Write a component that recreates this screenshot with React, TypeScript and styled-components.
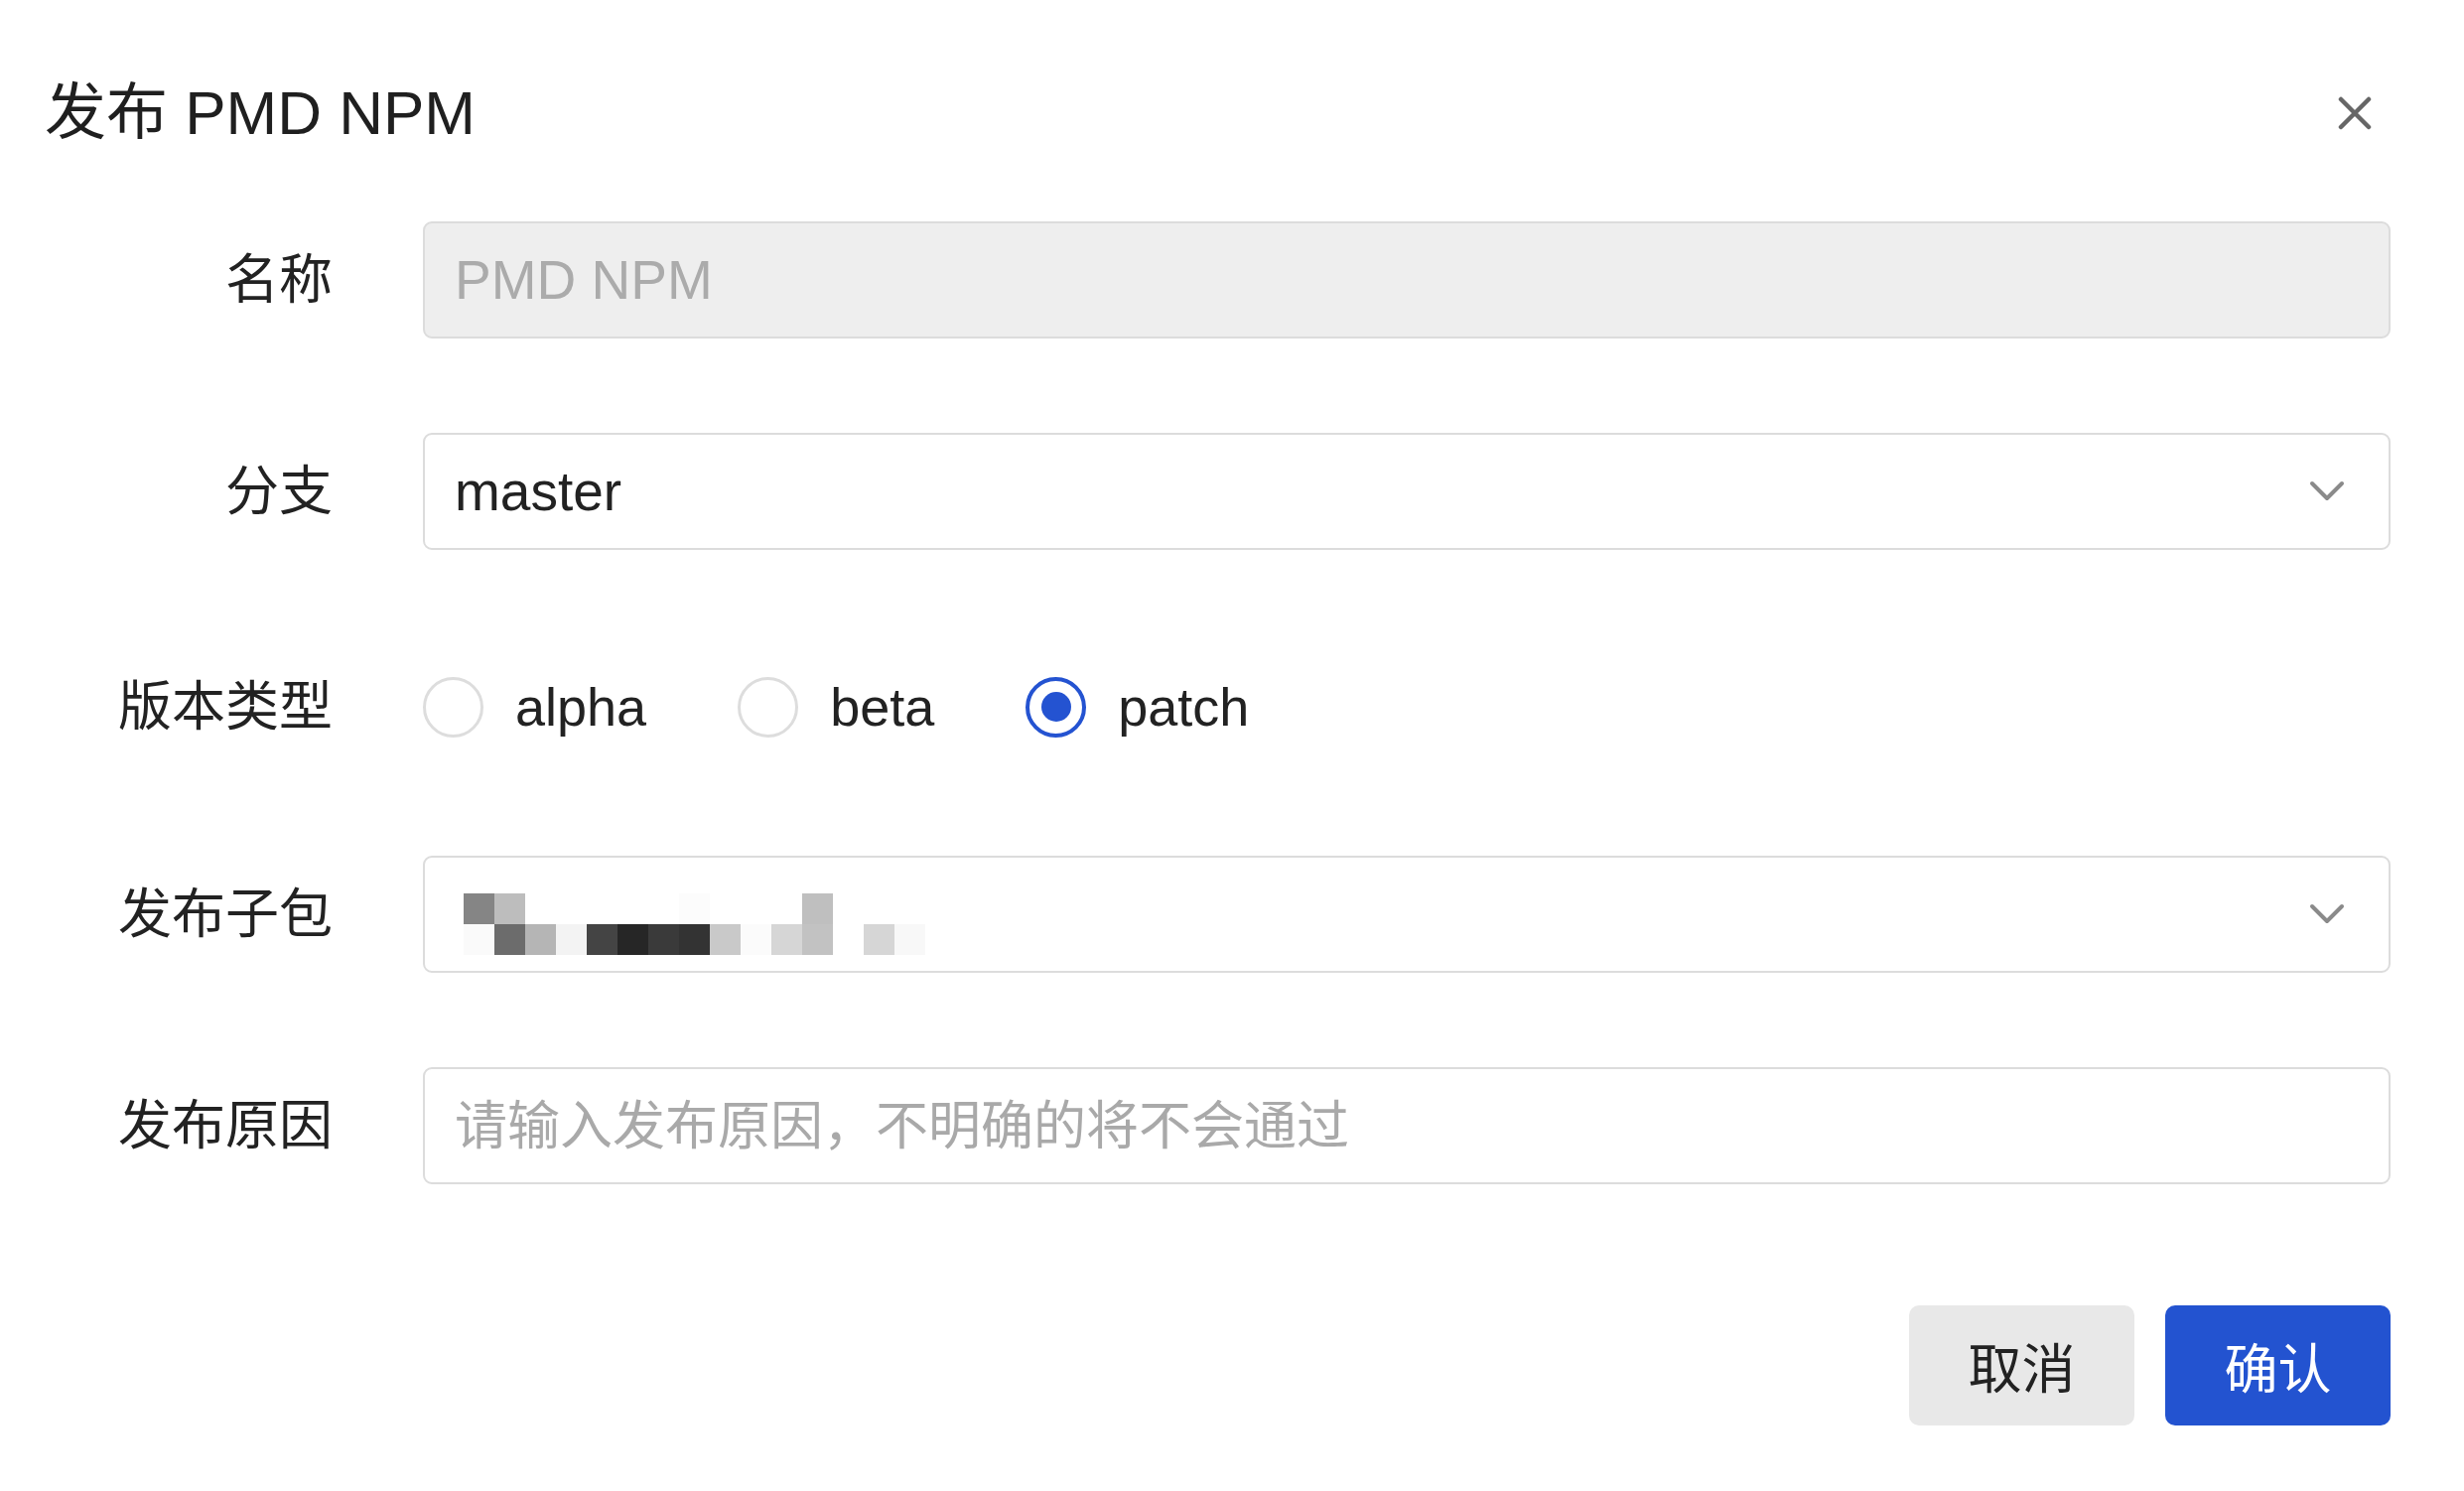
import styled, { createGlobalStyle } from "styled-components";

const GlobalStyle = createGlobalStyle`
  html, body {
    margin: 0;
    padding: 0;
    background: #ffffff;
  }
  body {
    font-family: "Liberation Sans", "Noto Sans CJK SC", sans-serif;
    color: #222222;
  }
  * {
    box-sizing: border-box;
  }
`;

const Dialog = styled.div`
  width: 2482px;
  min-height: 1502px;
  background: #ffffff;
  padding: 72px 74px 0 45px;
`;

const Header = styled.div`
  display: flex;
  align-items: center;
  justify-content: space-between;
  height: 84px;
`;

const Title = styled.h2`
  margin: 0;
  font-size: 62px;
  font-weight: 400;
  line-height: 84px;
  color: #1f1f1f;
`;

const CloseButton = styled.button`
  width: 72px;
  height: 72px;
  padding: 0;
  border: none;
  background: none;
  display: flex;
  align-items: center;
  justify-content: center;
  cursor: pointer;
`;

const Form = styled.div`
  margin-top: 67px;
  display: flex;
  flex-direction: column;
  gap: 95px;
`;

const Row = styled.div<{ $nudge?: number }>`
  display: grid;
  grid-template-columns: 290px 1fr;
  column-gap: 91px;
  align-items: center;
  min-height: 118px;
  padding-top: ${(p) => p.$nudge ?? 0}px;
`;

const Label = styled.label`
  text-align: right;
  font-size: 54px;
  line-height: 1.3;
  color: #222222;
`;

const TextInput = styled.input`
  width: 100%;
  height: 118px;
  border: 2px solid #dcdcdc;
  border-radius: 9px;
  padding: 0 30px;
  font-family: inherit;
  font-size: 55px;
  color: #222222;
  background: #ffffff;
  outline: none;

  &:disabled {
    background: #eeeeee;
    color: #ababab;
  }

  &::placeholder {
    font-size: 53px;
    color: #a9a9a9;
  }
`;

const Select = styled.div`
  height: 118px;
  border: 2px solid #dcdcdc;
  border-radius: 9px;
  padding: 0 44px 0 30px;
  display: flex;
  align-items: center;
  justify-content: space-between;
  font-size: 55px;
  color: #222222;
  background: #ffffff;
`;

const Mosaic = styled.svg`
  display: block;
  margin-top: 20px;
  margin-left: 9px;
`;

const RadioGroup = styled.div`
  display: flex;
  align-items: center;
  gap: 92px;
`;

const RadioItem = styled.label`
  display: flex;
  align-items: center;
  gap: 32px;
  font-size: 54px;
  color: #222222;
  cursor: pointer;
`;

const RadioCircle = styled.span<{ $checked?: boolean }>`
  position: relative;
  width: 61px;
  height: 61px;
  border-radius: 50%;
  border: ${(p) => (p.$checked ? "4px solid #2453d1" : "3px solid #dddddd")};
  background: #ffffff;

  &::after {
    content: "";
    display: ${(p) => (p.$checked ? "block" : "none")};
    position: absolute;
    left: 50%;
    top: 50%;
    width: 30px;
    height: 30px;
    margin: -15px 0 0 -15px;
    border-radius: 50%;
    background: #2453d1;
  }
`;

const Footer = styled.div`
  margin-top: 122px;
  display: flex;
  justify-content: flex-end;
  gap: 31px;
`;

const Button = styled.button<{ $primary?: boolean }>`
  width: 227px;
  height: 121px;
  border: none;
  border-radius: 10px;
  font-family: inherit;
  font-size: 54px;
  background: ${(p) => (p.$primary ? "#2353d0" : "#e8e8e8")};
  color: ${(p) => (p.$primary ? "#ffffff" : "#222222")};
  cursor: pointer;
`;

const Chevron = () => (
  <svg width="36" height="22" viewBox="0 0 36 22">
    <path d="M3 3 L18 18 L33 3" fill="none" stroke="#8a8a8a" strokeWidth="4" strokeLinecap="round" strokeLinejoin="round" />
  </svg>
);

// redacted package name, drawn as the pixel blocks seen in the screenshot
const mosaicTop: [number, string][] = [
  [0, "#858585"],
  [1, "#bdbdbd"],
  [7, "#fcfcfc"],
  [11, "#bfbfbf"],
];
const mosaicBottom: [number, string][] = [
  [0, "#fafafa"],
  [1, "#6c6c6c"],
  [2, "#b5b5b5"],
  [3, "#f3f3f3"],
  [4, "#444444"],
  [5, "#262626"],
  [6, "#3a3a3a"],
  [7, "#333333"],
  [8, "#c9c9c9"],
  [9, "#fbfbfb"],
  [10, "#d6d6d6"],
  [11, "#c2c2c2"],
  [13, "#d6d6d6"],
  [14, "#f8f8f8"],
];

export default function App() {
  return (
    <>
      <GlobalStyle />
      <Dialog>
        <Header>
          <Title>发布 PMD NPM</Title>
          <CloseButton aria-label="close">
            <svg width="34" height="34" viewBox="0 0 34 34">
              <path d="M3 3 L31 31 M31 3 L3 31" stroke="#666666" strokeWidth="4.5" strokeLinecap="round" />
            </svg>
          </CloseButton>
        </Header>

        <Form>
          <Row>
            <Label>名称</Label>
            <TextInput disabled value="PMD NPM" readOnly />
          </Row>

          <Row>
            <Label>分支</Label>
            <Select>
              <span>master</span>
              <Chevron />
            </Select>
          </Row>

          <Row $nudge={8}>
            <Label>版本类型</Label>
            <RadioGroup>
              <RadioItem>
                <RadioCircle />
                alpha
              </RadioItem>
              <RadioItem>
                <RadioCircle />
                beta
              </RadioItem>
              <RadioItem>
                <RadioCircle $checked />
                patch
              </RadioItem>
            </RadioGroup>
          </Row>

          <Row>
            <Label>发布子包</Label>
            <Select>
              <Mosaic width="466" height="62" viewBox="0 0 466 62" shapeRendering="crispEdges">
                {mosaicTop.map(([c, fill]) => (
                  <rect key={"t" + c} x={c * 31} y={0} width={31} height={31} fill={fill} />
                ))}
                {mosaicBottom.map(([c, fill]) => (
                  <rect key={"b" + c} x={c * 31} y={31} width={31} height={31} fill={fill} />
                ))}
              </Mosaic>
              <Chevron />
            </Select>
          </Row>

          <Row>
            <Label>发布原因</Label>
            <TextInput placeholder="请输入发布原因，不明确的将不会通过" />
          </Row>
        </Form>

        <Footer>
          <Button>取消</Button>
          <Button $primary>确认</Button>
        </Footer>
      </Dialog>
    </>
  );
}
